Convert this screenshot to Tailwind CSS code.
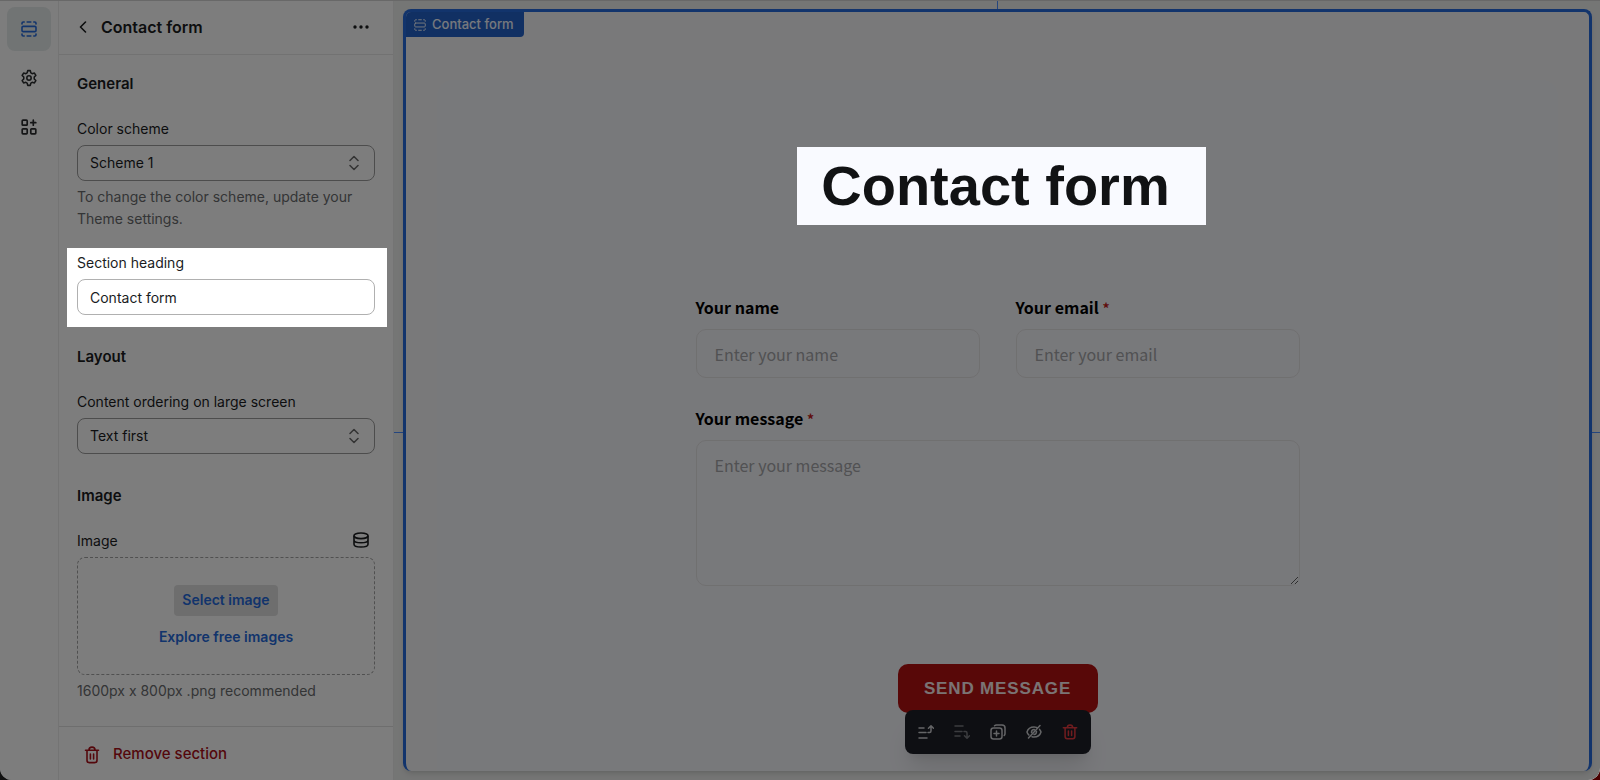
<!DOCTYPE html>
<html lang="en">
<head>
    <meta charset="UTF-8" />
    <meta name="viewport" content="width=device-width, initial-scale=1.0" />
    <title>Contact form - Theme editor</title>
    <script src="https://cdn.jsdelivr.net/npm/@tailwindcss/browser@4"></script>
</head>
<body class="bg-[linear-gradient(to_right,#111111,#4a0000)] font-['Inter',sans-serif] text-[#1a1c1e]">
    <div class="relative flex h-screen overflow-hidden rounded-b-xl border-t border-[#686868] bg-[#fbfbfb]">

        <!-- Icon rail -->
        <nav class="flex w-[59px] shrink-0 flex-col items-center gap-[5px] border-r border-[#e9e9e9] pt-1.5">
            <button type="button" aria-label="Sections" class="flex size-11 items-center justify-center rounded-lg bg-[#e2e8e8] text-[#2468d8]">
                <svg class="size-4" viewBox="0 0 16 16" fill="none" stroke="currentColor" stroke-width="1.6" stroke-linecap="round" stroke-linejoin="round">
                    <rect x="1" y="5.4" width="14" height="5.2" rx="1.2" />
                    <path d="M1 3V2.2C1 1.5 1.5 1 2.2 1H3.2M6.2 1h3.6M12.8 1h1c.7 0 1.2.5 1.2 1.2V3M1 13v.8c0 .7.5 1.2 1.2 1.2h1M6.2 15h3.6M12.8 15h1c.7 0 1.2-.5 1.2-1.2V13" />
                </svg>
            </button>
            <button type="button" aria-label="Theme settings" class="flex size-11 items-center justify-center rounded-lg text-[#2b2d2f]">
                <svg class="size-[18px]" viewBox="0 0 24 24" fill="none" stroke="currentColor" stroke-width="2.1" stroke-linejoin="round">
                    <path d="M10.3 2.2h3.4l.8 3 1.7 1 3-.8 1.9 3.2-2.1 2.1v2.6l2.1 2.1-1.9 3.2-3-.8-1.7 1-.8 3h-3.4l-.8-3-1.7-1-3 .8-1.9-3.2 2.1-2.1v-2.6L2.9 8.6l1.9-3.2 3 .8 1.7-1z" />
                    <circle cx="12" cy="12" r="2.9" />
                </svg>
            </button>
            <button type="button" aria-label="App embeds" class="flex size-11 items-center justify-center rounded-lg text-[#2b2d2f]">
                <svg class="size-4" viewBox="0 0 16 16" fill="none" stroke="currentColor" stroke-width="1.7" stroke-linecap="round" stroke-linejoin="round">
                    <rect x="1.2" y="1.2" width="5" height="5" rx=".8" />
                    <rect x="1.2" y="9.8" width="5" height="5" rx=".8" />
                    <rect x="9.8" y="9.8" width="5" height="5" rx=".8" />
                    <path d="M12.3 1.2v5M9.8 3.7h5" />
                </svg>
            </button>
        </nav>

        <!-- Settings panel -->
        <aside class="flex w-[335px] shrink-0 flex-col border-r border-[#e9e9e9]">
            <header class="flex h-[54px] shrink-0 items-center border-b border-[#e4e4e4] px-4 pb-0.5">
                <button type="button" aria-label="Back" class="flex size-4 items-center justify-center">
                    <svg class="size-3" viewBox="0 0 12 12" fill="none" stroke="currentColor" stroke-width="1.6" stroke-linecap="round" stroke-linejoin="round"><path d="M8.5 1L3.5 6l5 5" /></svg>
                </button>
                <h1 class="ml-2.5 flex-1 text-base font-semibold">Contact form</h1>
                <button type="button" aria-label="More actions" class="mr-1.5 flex size-5 items-center justify-center">
                    <svg class="h-1 w-4" viewBox="0 0 16 4" fill="currentColor"><circle cx="2" cy="2" r="1.7" /><circle cx="8" cy="2" r="1.7" /><circle cx="14" cy="2" r="1.7" /></svg>
                </button>
            </header>

            <div class="flex-1 overflow-hidden px-[18px] text-sm leading-[22px]">
                <h2 class="mt-[18px] text-[15px] font-semibold">General</h2>
                <label for="scheme" class="mt-[23px] block">Color scheme</label>
                <div class="relative mt-[5px]">
                    <select id="scheme" class="block h-9 w-full appearance-none rounded-lg border border-[#9a9a9a] px-3">
                        <option>Scheme 1</option>
                    </select>
                    <svg class="pointer-events-none absolute top-2.5 right-4 h-4 w-2.5" viewBox="0 0 10 16" fill="none" stroke="#666" stroke-width="1.5" stroke-linecap="round" stroke-linejoin="round"><path d="M1 5.5l4-4 4 4M1 10.5l4 4 4-4" /></svg>
                </div>
                <p class="mt-[5px] text-[#686a6c]">To change the color scheme, update your Theme settings.</p>

                <div class="relative z-20 -mr-3 -ml-2.5 mt-[18px] bg-white pt-1 pr-3 pb-3 pl-2.5">
                    <label for="heading" class="block">Section heading</label>
                    <input id="heading" type="text" value="Contact form" class="mt-[5px] block h-9 w-full rounded-lg border border-[#b0b0b0] px-3" />
                </div>

                <h2 class="mt-[19px] text-[15px] font-semibold">Layout</h2>
                <label for="order" class="mt-[23px] block">Content ordering on large screen</label>
                <div class="relative mt-[5px]">
                    <select id="order" class="block h-9 w-full appearance-none rounded-lg border border-[#9a9a9a] px-3">
                        <option>Text first</option>
                    </select>
                    <svg class="pointer-events-none absolute top-2.5 right-4 h-4 w-2.5" viewBox="0 0 10 16" fill="none" stroke="#666" stroke-width="1.5" stroke-linecap="round" stroke-linejoin="round"><path d="M1 5.5l4-4 4 4M1 10.5l4 4 4-4" /></svg>
                </div>

                <h2 class="mt-[31px] text-[15px] font-semibold">Image</h2>
                <div class="mt-[23px] flex items-start justify-between">
                    <span>Image</span>
                    <button type="button" aria-label="Connect dynamic source" class="mt-0.5 mr-1.5">
                        <svg class="size-4" viewBox="0 0 16 16" fill="none" stroke="currentColor" stroke-width="1.6"><ellipse cx="8" cy="3.8" rx="7" ry="2.8" /><path d="M1 3.800v8.400c0 1.600 3.100 2.800 7 2.800s7-1.200 7-2.800V3.800M1 8c0 1.600 3.100 2.800 7 2.800S15 9.600 15 8" /></svg>
                    </button>
                </div>
                <div class="mt-[5px] flex h-[118px] flex-col items-center justify-center gap-2.5 rounded-lg border border-dashed border-[#a0a0a0] font-semibold text-[#2468d8]">
                    <button type="button" class="h-[31px] rounded bg-[#dcdcdc] px-2">Select image</button>
                    <a href="#">Explore free images</a>
                </div>
                <p class="mt-[5px] text-[#686a6c]">1600px x 800px .png recommended</p>
            </div>

            <footer class="flex h-[54px] shrink-0 items-center border-t border-[#dcdcdc] px-6 pt-0.5">
                <button type="button" class="flex items-center gap-3 text-[15px] font-medium text-[#a80f18]">
                    <svg class="size-[18px]" viewBox="0 0 18 18" fill="none" stroke="currentColor" stroke-width="1.6" stroke-linecap="round" stroke-linejoin="round"><path d="M2.500 4.200h13M6 4c0-1.700 1.300-2.900 3-2.900s3 1.200 3 2.900M4 4.500v9.700c0 1.400 1 2.400 2.400 2.400h5.200c1.400 0 2.400-1 2.400-2.400V4.500M7.400 8v5M10.600 8v5" /></svg>
                    Remove section
                </button>
            </footer>
        </aside>

        <!-- Preview canvas -->
        <main class="relative flex-1 bg-[#ebeceb] pt-2 pr-2 pb-[9px] pl-[9px]">
            <div class="absolute top-0 left-1/2 h-2 w-px bg-[#4a8cff]"></div>
            <div class="absolute inset-x-0 top-[431px] h-px bg-[#4a8cff]"></div>

            <section class="relative flex h-full flex-col items-center overflow-hidden rounded-lg border-x-3 border-t-3 border-[#2468d8] bg-[#f2f3f4] px-[31px] pt-[68px] shadow-md">
                <div class="absolute top-0 left-0 flex h-[25px] items-center gap-1.5 rounded-br bg-[#2260c6] pr-2.5 pl-2 text-[13px] font-medium text-[#eef2fb]">
                    <svg class="size-3" viewBox="0 0 16 16" fill="none" stroke="currentColor" stroke-width="1.3" stroke-linecap="round" stroke-linejoin="round">
                        <rect x="1" y="5.4" width="14" height="5.2" rx="1.2" />
                        <path d="M1 3V2.2C1 1.5 1.5 1 2.2 1H3.2M6.2 1h3.6M12.8 1h1c.7 0 1.2.5 1.2 1.2V3M1 13v.8c0 .7.5 1.2 1.2 1.2h1M6.2 15h3.6M12.8 15h1c.7 0 1.2-.5 1.2-1.2V13" />
                    </svg>
                    Contact form
                </div>

                <div class="flex w-full flex-1 flex-col items-center rounded-t-2xl bg-[#f1f2f7] pt-[67px] font-['Noto_Sans_CJK_JP',sans-serif]">
                    <h2 class="relative z-20 ml-2 bg-[#f9faff] pr-9 pl-6 font-['Liberation_Sans',sans-serif] text-[56px] leading-[78px] font-bold text-[#111214]">Contact form</h2>

                    <form class="mt-[70px] grid w-full max-w-[604px] grid-cols-2 gap-x-9 text-base leading-6" onsubmit="event.preventDefault()">
                        <div>
                            <label for="name" class="block font-bold text-black">Your name</label>
                            <input id="name" type="text" placeholder="Enter your name" class="mt-2.5 block h-[49px] w-full rounded-[10px] border border-[#e0e0e0] px-[18px] placeholder:text-[#a2a3a6]" />
                        </div>
                        <div>
                            <label for="email" class="block font-bold text-black">Your email <span class="text-sm text-[#c01a1a]">*</span></label>
                            <input id="email" type="email" placeholder="Enter your email" class="mt-2.5 block h-[49px] w-full rounded-[10px] border border-[#e0e0e0] px-[18px] placeholder:text-[#a2a3a6]" />
                        </div>
                        <div class="col-span-2 mt-7">
                            <label for="message" class="block font-bold text-black">Your message <span class="text-sm text-[#c01a1a]">*</span></label>
                            <textarea id="message" placeholder="Enter your message" class="mt-2.5 block h-[146px] w-full resize rounded-[10px] border border-[#e0e0e0] px-[18px] py-3 placeholder:text-[#a2a3a6]"></textarea>
                        </div>
                        <button type="submit" class="col-span-2 mt-[78px] h-[49px] w-[200px] justify-self-center rounded-[10px] bg-[#b01010] font-['Liberation_Sans',sans-serif] text-[17px] font-bold tracking-wider text-[#f5e8e8]">SEND MESSAGE</button>
                    </form>

                    <div class="relative -mt-[3px] flex h-11 items-center gap-5 rounded-lg bg-[#1d1f26] px-[13px] text-[#c9cace] shadow-xl">
                        <button type="button" aria-label="Move up"><svg class="size-4" viewBox="0 0 16 16" fill="none" stroke="currentColor" stroke-width="1.5" stroke-linecap="round" stroke-linejoin="round"><path d="M1 4h5M1 8.500h7M1 14h8M10 8.500h1.500c1 0 1.500-.6 1.500-1.500V2M10.500 4.200L13 1.700l2.500 2.500" /></svg></button>
                        <button type="button" aria-label="Move down" class="text-[#77797f]"><svg class="size-4" viewBox="0 0 16 16" fill="none" stroke="currentColor" stroke-width="1.5" stroke-linecap="round" stroke-linejoin="round"><path d="M1 2h8M1 7.500h7M1 12h5M10 7.500h1.500c1 0 1.500.6 1.500 1.500v5M10.500 11.800l2.500 2.500 2.500-2.500" /></svg></button>
                        <button type="button" aria-label="Duplicate"><svg class="size-4" viewBox="0 0 16 16" fill="none" stroke="currentColor" stroke-width="1.5" stroke-linecap="round" stroke-linejoin="round"><rect x="1" y="4" width="11" height="11" rx="2.5" /><path d="M4.500 1.800C5 1.300 5.600 1 6.500 1H12c1.700 0 3 1.300 3 3v5.500c0 .9-.3 1.500-.8 2M6.500 7v5M4 9.500h5" /></svg></button>
                        <button type="button" aria-label="Hide"><svg class="size-4" viewBox="0 0 16 16" fill="none" stroke="currentColor" stroke-width="1.5" stroke-linecap="round" stroke-linejoin="round"><path d="M14 1.500L2.500 14M10.500 3.400C9.700 3.100 8.900 3 8 3 4.500 3 1.800 5.300 1 8c.3 1.100.9 2.100 1.800 2.900M13.600 5.400c.7.800 1.200 1.700 1.400 2.600-.8 2.700-3.500 5-7 5-.7 0-1.400-.1-2-.3M5.500 8.500C5.500 6.800 6.600 5.500 8.300 5.500M10.500 7.500c0 1.700-.9 2.900-2.500 3" /></svg></button>
                        <button type="button" aria-label="Remove" class="text-[#e0393e]"><svg class="size-4" viewBox="0 0 18 18" fill="none" stroke="currentColor" stroke-width="1.7" stroke-linecap="round" stroke-linejoin="round"><path d="M1.500 4.200h15M6 4c0-1.700 1.300-2.900 3-2.900s3 1.200 3 2.900M3.500 4.500v9.700c0 1.400 1 2.400 2.400 2.400h6.200c1.400 0 2.400-1 2.400-2.400V4.500M7.200 8v5M10.800 8v5" /></svg></button>
                    </div>
                </div>
            </section>
        </main>

        <!-- Dimmer: anything at z-20 stays lit -->
        <div class="pointer-events-none absolute inset-0 z-10 bg-black/50"></div>
    </div>
</body>
</html>
